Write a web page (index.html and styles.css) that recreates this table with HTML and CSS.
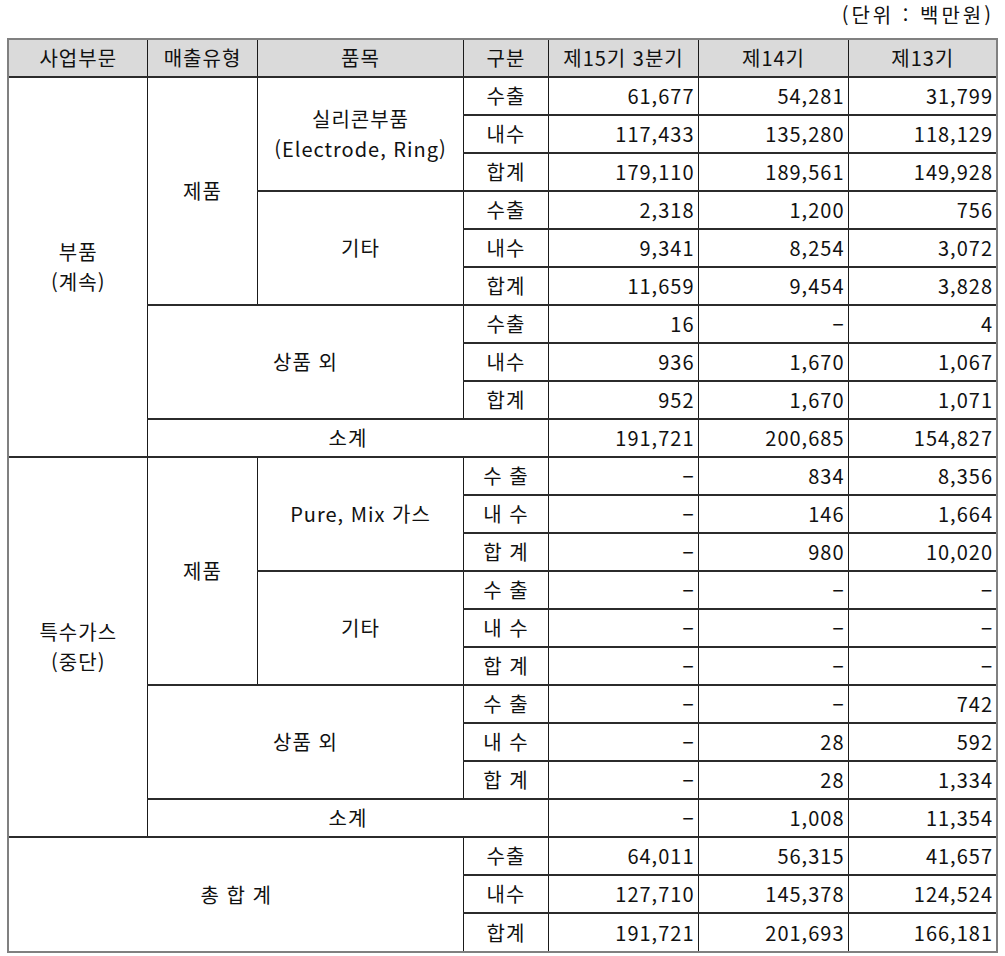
FILE: index.html
```html
<!DOCTYPE html>
<html lang="ko">
<head>
<meta charset="utf-8">
<link rel="stylesheet" href="styles.css">
</head>
<body>
<div class="page">
  <div class="unit">(단위 : 백만원)</div>
  <div class="frame">
    <table class="sales">
      <colgroup>
        <col class="c1"><col class="c2"><col class="c3"><col class="c4"><col class="c5"><col class="c6"><col class="c7">
      </colgroup>
      <thead>
        <tr>
          <th>사업부문</th><th>매출유형</th><th>품목</th><th>구분</th><th>제15기 3분기</th><th>제14기</th><th>제13기</th>
        </tr>
      </thead>
      <tbody>
        <tr>
          <td rowspan="10" class="ctr">부품<br>(계속)</td>
          <td rowspan="6" class="ctr">제품</td>
          <td rowspan="3" class="ctr">실리콘부품<br>(Electrode, Ring)</td>
          <td class="ctr">수출</td><td class="num">61,677</td><td class="num">54,281</td><td class="num">31,799</td>
        </tr>
        <tr><td class="ctr">내수</td><td class="num">117,433</td><td class="num">135,280</td><td class="num">118,129</td></tr>
        <tr><td class="ctr">합계</td><td class="num">179,110</td><td class="num">189,561</td><td class="num">149,928</td></tr>
        <tr>
          <td rowspan="3" class="ctr">기타</td>
          <td class="ctr">수출</td><td class="num">2,318</td><td class="num">1,200</td><td class="num">756</td>
        </tr>
        <tr><td class="ctr">내수</td><td class="num">9,341</td><td class="num">8,254</td><td class="num">3,072</td></tr>
        <tr><td class="ctr">합계</td><td class="num">11,659</td><td class="num">9,454</td><td class="num">3,828</td></tr>
        <tr>
          <td rowspan="3" colspan="2" class="ctr">상품 외</td>
          <td class="ctr">수출</td><td class="num">16</td><td class="num">−</td><td class="num">4</td>
        </tr>
        <tr><td class="ctr">내수</td><td class="num">936</td><td class="num">1,670</td><td class="num">1,067</td></tr>
        <tr><td class="ctr">합계</td><td class="num">952</td><td class="num">1,670</td><td class="num">1,071</td></tr>
        <tr><td colspan="3" class="ctr">소계</td><td class="num">191,721</td><td class="num">200,685</td><td class="num">154,827</td></tr>

        <tr>
          <td rowspan="10" class="ctr">특수가스<br>(중단)</td>
          <td rowspan="6" class="ctr">제품</td>
          <td rowspan="3" class="ctr">Pure, Mix 가스</td>
          <td class="ctr">수 출</td><td class="num">−</td><td class="num">834</td><td class="num">8,356</td>
        </tr>
        <tr><td class="ctr">내 수</td><td class="num">−</td><td class="num">146</td><td class="num">1,664</td></tr>
        <tr><td class="ctr">합 계</td><td class="num">−</td><td class="num">980</td><td class="num">10,020</td></tr>
        <tr>
          <td rowspan="3" class="ctr">기타</td>
          <td class="ctr">수 출</td><td class="num">−</td><td class="num">−</td><td class="num">−</td>
        </tr>
        <tr><td class="ctr">내 수</td><td class="num">−</td><td class="num">−</td><td class="num">−</td></tr>
        <tr><td class="ctr">합 계</td><td class="num">−</td><td class="num">−</td><td class="num">−</td></tr>
        <tr>
          <td rowspan="3" colspan="2" class="ctr">상품 외</td>
          <td class="ctr">수 출</td><td class="num">−</td><td class="num">−</td><td class="num">742</td>
        </tr>
        <tr><td class="ctr">내 수</td><td class="num">−</td><td class="num">28</td><td class="num">592</td></tr>
        <tr><td class="ctr">합 계</td><td class="num">−</td><td class="num">28</td><td class="num">1,334</td></tr>
        <tr><td colspan="3" class="ctr">소계</td><td class="num">−</td><td class="num">1,008</td><td class="num">11,354</td></tr>

        <tr>
          <td rowspan="3" colspan="3" class="ctr">총 합 계</td>
          <td class="ctr">수출</td><td class="num">64,011</td><td class="num">56,315</td><td class="num">41,657</td>
        </tr>
        <tr><td class="ctr">내수</td><td class="num">127,710</td><td class="num">145,378</td><td class="num">124,524</td></tr>
        <tr><td class="ctr">합계</td><td class="num">191,721</td><td class="num">201,693</td><td class="num">166,181</td></tr>
      </tbody>
    </table>
  </div>
</div>
</body>
</html>
```

FILE: styles.css
```css
html, body {
  margin: 0;
  padding: 0;
  background: #ffffff;
}

body {
  font-family: "Noto Sans CJK KR", "Noto Sans", sans-serif;
  font-size: 20px;
  color: #111111;
}

.page {
  padding: 0 9px 0 7px;
}

.unit {
  height: 38px;
  line-height: 24px;
  padding-top: 3px;
  padding-right: 2px;
  text-align: right;
  letter-spacing: 3px;
  box-sizing: border-box;
}

.frame {
  width: 987px;
  border: 2px solid #808080;
}

.sales {
  width: 987px;
  table-layout: fixed;
  border-collapse: collapse;
  border-style: hidden;
  letter-spacing: 1px;
}

.c1 { width: 138px; }
.c2 { width: 110px; }
.c3 { width: 206px; }
.c4 { width: 85px; }
.c5 { width: 150px; }
.c6 { width: 150px; }
.c7 { width: 148px; }

.sales th,
.sales td {
  padding: 0 3px 0 4px;
  border-top: 2px solid #2b2b2b;
  border-bottom: 2px solid #2b2b2b;
  border-left: 1px solid #1a1a1a;
  border-right: 1px solid #1a1a1a;
  font-weight: normal;
  line-height: 30px;
  white-space: nowrap;
}

.sales thead tr {
  height: 37px;
}

.sales thead th {
  background: #dadada;
  text-align: center;
}

.sales tbody tr {
  height: 38px;
}

.ctr {
  text-align: center;
}

.num {
  text-align: right;
}
```
